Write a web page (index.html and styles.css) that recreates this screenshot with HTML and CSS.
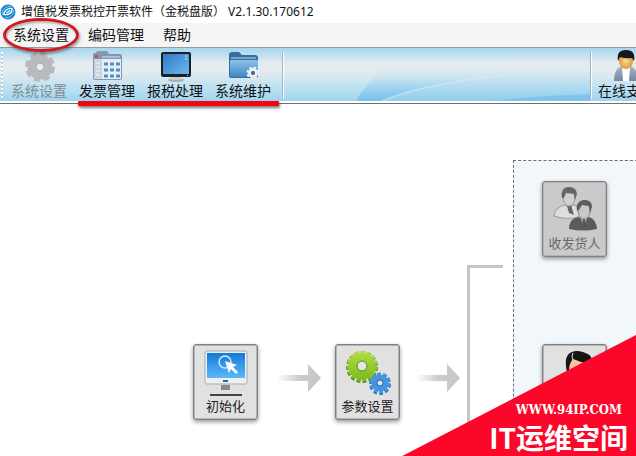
FILE: index.html
```html
<!DOCTYPE html>
<html lang="zh-CN">
<head>
<meta charset="utf-8">
<title>增值税发票税控开票软件</title>
<link rel="stylesheet" href="styles.css">
</head>
<body>
<svg class="defs" aria-hidden="true">
  <defs>
    <linearGradient id="screen" x1="0" y1="0" x2="1" y2="1"><stop offset="0" stop-color="#2f7cc4"/><stop offset="1" stop-color="#6db6ef"/></linearGradient>
    <linearGradient id="folder" x1="0" y1="0" x2="0" y2="1"><stop offset="0" stop-color="#8fc3ea"/><stop offset="1" stop-color="#4287c2"/></linearGradient>
    <linearGradient id="display" x1="0" y1="0" x2="0" y2="1"><stop offset="0" stop-color="#1579d8"/><stop offset="1" stop-color="#5ab9fa"/></linearGradient>
    <linearGradient id="green" gradientUnits="userSpaceOnUse" x1="0" y1="2" x2="0" y2="32"><stop offset="0" stop-color="#b4e045"/><stop offset="1" stop-color="#7cba1b"/></linearGradient>
    <linearGradient id="arrow" x1="0" y1="0" x2="1" y2="0"><stop offset="0" stop-color="#cccccc" stop-opacity="0"/><stop offset=".5" stop-color="#cccccc"/><stop offset="1" stop-color="#c6c6c6"/></linearGradient>
    <linearGradient id="suit" x1="0" y1="0" x2="0" y2="1"><stop offset="0" stop-color="#a9b6c5"/><stop offset="1" stop-color="#74879d"/></linearGradient>
    <radialGradient id="face"><stop offset="0" stop-color="#ffdc91"/><stop offset="1" stop-color="#d99840"/></radialGradient>
    <linearGradient id="sweep" x1="0" y1="0" x2="0" y2="1"><stop offset=".3" stop-color="#7fc4ec" stop-opacity="0"/><stop offset="1" stop-color="#6fbdea"/></linearGradient>
  </defs>
</svg>
<header class="titlebar">
  <svg class="logo" viewBox="0 0 16 16" aria-hidden="true">
    <circle cx="8" cy="8" r="7.5" fill="#1787cf"/>
    <path d="M2.500 11C1 6 6 2 11 2.500M5 13.500c5 1 9-3 8.500-8" fill="none" stroke="#7cc6ee" stroke-width="1"/>
    <path d="M4 10.500c0-4 4-6.500 8-6 .5 4-3 7-8 6zM6.500 9l3.500-2.500" fill="none" stroke="#fff" stroke-width="1.300"/>
  </svg>
  <h1 class="title">增值税发票税控开票软件（金税盘版） V2.1.30.170612</h1>
</header>
<nav class="menubar">
  <button class="menu circled">系统设置</button>
  <button class="menu">编码管理</button>
  <button class="menu">帮助</button>
</nav>
<div class="toolbar">
  <span class="grip"></span>
  <button class="tool" disabled>
    <svg class="tool-icon" viewBox="0 0 32 32" aria-hidden="true">
      <g fill="none" stroke="#b8babb"><circle cx="17" cy="17" r="8" stroke-width="9"/><circle cx="17" cy="17" r="13" stroke-width="4" stroke-dasharray="6.200 4.010"/></g>
      <circle cx="17" cy="17" r="4" fill="#e8ecee" stroke="#a8abad"/>
    </svg>
    <span>系统设置</span>
  </button>
  <div class="marked">
    <button class="tool">
      <svg class="tool-icon" viewBox="0 0 32 32" aria-hidden="true">
        <path d="M2 5q0-2 2-2h1l1-2h10l2 3h11q2 0 2 2v22q0 2-2 2H4q-2 0-2-2z" fill="#8198b2"/>
        <path d="M3 9h27v19q0 1-1 1H4q-1 0-1-1z" fill="#e9eef3"/><path d="M3 9h8v20H4q-1 0-1-1z" fill="#cbd5df"/>
        <path d="M4 6.500h3" stroke="#d94d45" stroke-width="3"/><path d="M11 7h18" stroke="#aebdce" stroke-width="2"/>
        <g stroke="#4f8fc7" stroke-width="3"><path d="M13 14h4m2 0h4m2 0h4M13 20h4m2 0h4m2 0h4M13 26h4m2 0h4m2 0h4"/></g>
        <path d="M5 13h4M5 17h4M5 21h4M5 25h4" stroke="#f5f8fa"/>
      </svg>
      <span>发票管理</span>
    </button>
    <button class="tool">
      <svg class="tool-icon" viewBox="0 0 32 32" aria-hidden="true">
        <ellipse cx="17" cy="30" rx="8" ry="2" fill="#a8b0b6"/><path d="M13 26h8l1 4H12z" fill="#c7ced3"/>
        <rect x="2" y="2" width="30" height="25" rx="2" fill="#182028"/><rect x="4" y="4" width="26" height="20" fill="url(#screen)"/>
        <path d="M26 6h2M26 9h2" stroke="#d6edff"/><path d="M28 25.500h1" stroke="#6fe0ff"/>
      </svg>
      <span>报税处理</span>
    </button>
    <button class="tool">
      <svg class="tool-icon" viewBox="0 0 32 32" aria-hidden="true">
        <path d="M2 5q0-3 3-3h7l3 3h13q3 0 3 3v18q0 2-2 2H4q-2 0-2-2z" fill="#356da0"/>
        <rect x="3" y="10" width="28" height="17" rx="1" fill="url(#folder)"/><path d="M4 8h25" stroke="#c5dff3"/>
        <g fill="none" stroke="#eef1f3"><circle cx="26" cy="23" r="3.500" stroke-width="3"/><circle cx="26" cy="23" r="5.500" stroke-width="2" stroke-dasharray="2.500 1.820"/></g>
        <circle cx="26" cy="23" r="2" fill="#53697c"/>
      </svg>
      <span>系统维护</span>
    </button>
  </div>
  <span class="divider"></span>
  <svg class="sweep" viewBox="0 0 306 54" preserveAspectRatio="none" aria-hidden="true">
    <path d="M72 54Q90 22 120 0H306V54z" fill="url(#sweep)" opacity=".3"/>
    <path d="M72 54Q84 34 100 22L250 26Q150 32 98 54z" fill="url(#sweep)" opacity=".7"/>
    <path d="M98 54Q150 32 250 26" fill="none" stroke="#d5edf7" stroke-width="1.500" opacity=".6"/>
    <path d="M210 54q45-6 96-7v7z" fill="#76bdec" opacity=".7"/>
  </svg>
  <span class="divider"></span>
  <button class="tool support">
    <svg class="tool-icon" viewBox="0 0 32 32" aria-hidden="true">
      <path d="M4 31q0-13 8-15h8q8 2 8 15z" fill="url(#suit)"/><path d="M12 17h8l-1 14h-6z" fill="#fff"/>
      <ellipse cx="16" cy="11" rx="7" ry="8" fill="url(#face)"/><path d="M8 11Q6 0 16 0t8 11l-2-3q-6 1-12-1z" fill="#17191b"/>
    </svg>
    <span>在线支持</span>
  </button>
</div>
<main class="canvas">
  <button class="node start">
    <svg class="node-icon" viewBox="0 0 48 48" aria-hidden="true">
      <rect x="3" y="3" width="42" height="33" rx="2" fill="#edf1f4" stroke="#a5aaae"/><rect x="5" y="5" width="38" height="25" fill="url(#display)"/>
      <path d="M21 33h5" stroke="#2268a8" stroke-width="2"/><path d="M19 37h9v5h-9z" fill="#858a8e"/><path d="M8 47h32" stroke="#111" stroke-width="1.500"/>
      <circle cx="23" cy="14" r="6" fill="none" stroke="#cdeaff" stroke-width="1.500"/><path d="M23 13l12 4-4 2 5 5-2 2-5-5-2 4z" fill="#fff"/>
    </svg>
    <span>初始化</span>
  </button>
  <svg class="arrow first" viewBox="0 0 44 28" aria-hidden="true"><path d="M0 11h31V0l13 14-13 14V17H0z" fill="url(#arrow)"/></svg>
  <button class="node params">
    <svg class="node-icon" viewBox="0 0 48 48" aria-hidden="true">
      <circle cx="18" cy="19" r="14" fill="none" stroke="#548819" stroke-width="4" stroke-dasharray="3.700 2.160"/>
      <g fill="none" stroke="url(#green)"><circle cx="18" cy="18" r="9" stroke-width="9"/><circle cx="18" cy="18" r="14" stroke-width="3" stroke-dasharray="3.700 2.160"/></g>
      <circle cx="18" cy="18" r="5" fill="#e4e4e4" stroke="#568d18"/>
      <circle cx="36" cy="36" r="9" fill="none" stroke="#2e72b8" stroke-width="4" stroke-dasharray="3.300 2.350"/>
      <g fill="none" stroke="#4495df"><circle cx="36" cy="35" r="5.500" stroke-width="6"/><circle cx="36" cy="35" r="9" stroke-width="3" stroke-dasharray="3.300 2.350"/></g>
      <circle cx="36" cy="35" r="3" fill="#e4e4e4" stroke="#2367aa"/>
    </svg>
    <span>参数设置</span>
  </button>
  <svg class="arrow second" viewBox="0 0 44 28" aria-hidden="true"><path d="M0 11h31V0l13 14-13 14V17H0z" fill="url(#arrow)"/></svg>
  <span class="branch"></span>
  <section class="group">
    <button class="node" disabled>
      <svg class="node-icon" viewBox="0 0 48 48" aria-hidden="true">
        <path d="M3 31q1-9 11-11l4 2 5-2q6 2 7 11-13 5-27 0z" fill="#dedede" stroke="#999"/><path d="M16 21l4-1 3 10-5-2z" fill="#666"/>
        <ellipse cx="18" cy="13" rx="6" ry="8" fill="#cfcfcf" stroke="#999"/><path d="M11 13Q9 3 17 2q8-1 9 7l-2 6-1-6-8-1-2 5z" fill="#666"/>
        <path d="M18 44q0-10 9-12l6 3 5-3q7 2 8 12-14 3-28 0z" fill="#5b5b5b"/><path d="M30 34l6-1-3 9z" fill="#bbb"/><path d="M32 34h2l1 8h-4z" fill="#555"/>
        <ellipse cx="33" cy="26" rx="6" ry="8" fill="#c8c8c8" stroke="#888"/><path d="M26 26q-2-9 6-11 9-1 9 7l-2 6-1-7-7-1-3 5z" fill="#5d5d5d"/>
      </svg>
      <span>收发货人</span>
    </button>
    <button class="node">
      <svg class="node-icon" viewBox="0 0 48 48" aria-hidden="true">
        <path d="M8 47q1-15 17-16 14 1 15 16z" fill="#55606d"/><ellipse cx="26" cy="20" rx="10" ry="14" fill="#f3c4a0"/>
        <path d="M16 24Q12 7 21 4q4-2 11 0 10 3 8 8-4 4-10 2-5-2-8-3-4 4-4 12z" fill="#151515"/><path d="M22 5q-2 3 0 7" fill="none" stroke="#eee"/>
      </svg>
    </button>
  </section>
</main>
<aside class="watermark">
  <span class="site">WWW.94IP.COM</span>
  <span class="name">IT运维空间</span>
</aside>
</body>
</html>
```
FILE: styles.css
```css
* { box-sizing: border-box; }
html, body { height: 100%; }
body {
  margin: 0;
  display: flex;
  flex-direction: column;
  position: relative;
  overflow: hidden;
  background: #fff;
  color: #111;
  font: 14px/20px "Noto Sans CJK SC", sans-serif;
}
button { margin: 0; padding: 0; border: 0; background: none; color: inherit; font: inherit; white-space: nowrap; }
svg { display: block; flex: none; }
.defs { position: absolute; width: 0; height: 0; }

.titlebar { display: flex; align-items: center; gap: 5px; height: 23px; flex: none; }
.logo { width: 16px; height: 16px; }
.title { margin: 0; font: 12px/20px "Noto Sans", "Noto Sans CJK SC", sans-serif; white-space: nowrap; }

.menubar { display: flex; align-items: flex-start; gap: 19px; height: 24px; padding: 1px 0 0 13px; flex: none; background: #f5f5f5; }
.menu { position: relative; }
.circled::after {
  content: "";
  position: absolute;
  z-index: 2;
  inset: -6px -10px -8px;
  border: 3px solid #cf1820;
  border-radius: 50%;
  box-shadow: 1px 2px 3px #0006, inset 1px 2px 2px #0004;
}

.toolbar {
  display: flex;
  flex: none;
  height: 57px;
  overflow-x: clip;
  border-top: 1px solid #909da5;
  border-bottom: 1px solid #707070;
  background: linear-gradient(#a6d7ee, #e5ecef 28%, #e5ecef 42%, #b9e0f2 75%, #9fd5ef 96%, #fff 97%);
}
.grip { width: 2px; margin: 4px 2px 4px 1px; background: repeating-linear-gradient(#fff 0 2px, #9ebdcb 2px 3px, transparent 3px 4px); }
.tool { display: flex; flex-direction: column; align-items: center; justify-content: flex-start; width: 68px; padding-top: 2px; flex: none; line-height: 16px; }
.tool:disabled { color: #858d91; }
.tool-icon { width: 32px; height: 32px; }
.marked { display: flex; position: relative; }
.marked::after {
  content: "";
  position: absolute;
  z-index: 2;
  left: 5px;
  right: -2px;
  bottom: -3px;
  height: 5px;
  border-radius: 1px;
  background: #f20510;
  box-shadow: 1px 2px 3px #0008;
}
.divider { width: 2px; margin: 4px 0; border-left: 1px solid #9db8c4; background: #fff; flex: none; }
.marked + .divider { margin-left: 5px; }
.sweep { flex: 1 1 0; width: 0; height: 53px; }
.support { margin-right: -24px; }

.canvas { position: relative; flex: 1; min-height: 0; overflow: hidden; }
.node {
  display: flex;
  flex-direction: column;
  align-items: center;
  justify-content: flex-start;
  width: 65px;
  height: 76px;
  padding-top: 3px;
  border: 1px solid #808080;
  border-radius: 3px;
  background: #e1e1e1;
  box-shadow: inset 0 0 0 1px #b4b4b4, 0 2px 4px #0006;
  color: #222;
  font-size: 13px;
}
.node:disabled { background: #cacaca; color: #686868; }
.node-icon { width: 48px; height: 48px; }
.start { position: absolute; left: 193px; top: 240px; }
.params { position: absolute; left: 335px; top: 240px; }
.arrow { position: absolute; top: 260px; width: 44px; height: 28px; }
.first { left: 277px; }
.second { left: 416px; }
.branch { position: absolute; left: 467px; top: 161px; width: 36px; bottom: 0; border: solid #c5c5c5; border-width: 3px 0 0 3px; }
.group {
  position: absolute;
  left: 513px;
  right: -2px;
  top: 56px;
  bottom: -20px;
  display: flex;
  flex-direction: column;
  gap: 87px;
  padding: 20px 28px;
  border: 1px dashed #60717e;
  background: #f2f7fc;
}

.watermark {
  position: absolute;
  z-index: 3;
  right: 0;
  bottom: 0;
  display: flex;
  flex-direction: column;
  align-items: flex-end;
  padding: 67px 8px 0 87px;
  background: #fc0729;
  clip-path: polygon(100% 0, 100% 100%, 0 100%);
  color: #fff;
  white-space: nowrap;
}
.site { padding-right: 6px; font: bold 13px/16px "DejaVu Serif Condensed", "Liberation Serif", serif; }
.name { font: bold 28px/38px "Noto Sans CJK SC", sans-serif; }
```
